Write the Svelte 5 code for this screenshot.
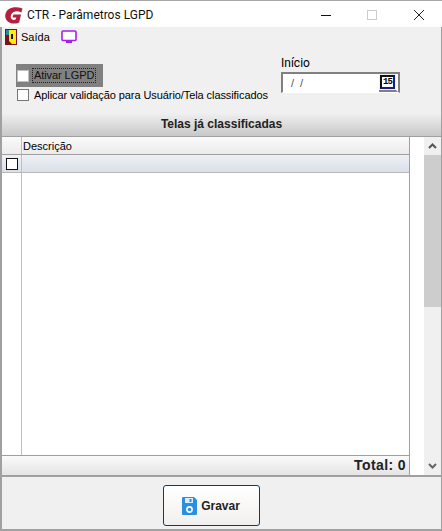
<script lang="ts">
	let ativar = $state(false);
	let aplicar = $state(false);
</script>

<div class="window">
	<header class="titlebar">
		<svg class="logo" viewBox="0 0 18 17" width="18" height="17">
			<path d="M17.5 1.6 C13 -0.2 7.5 -0.2 4 2 C0.2 4.4 -1 9.6 1.6 13.2 C4.4 17 10.2 17.4 14.2 15.4 L16 7.6 L8.4 7.6 L7.6 10.4 L11.4 10.4 L10.6 12.6 C8.4 13.4 6.2 12.6 5.8 10.2 C5.4 7.2 7.4 4.8 10.4 4.4 C12.4 4.2 14.6 4.6 16.4 5.4 Z" fill="#b3213f" />
		</svg>
		<span class="title">CTR - Parâmetros LGPD</span>
		<div class="winbtns">
			<span class="min"></span>
			<span class="max"></span>
			<svg width="12" height="12" viewBox="0 0 12 12"><path d="M1 1 L11 11 M11 1 L1 11" stroke="#222" stroke-width="1" fill="none" /></svg>
		</div>
	</header>

	<div class="body">
		<nav class="toolbar">
			<button class="tool exit">
				<svg width="12" height="16" viewBox="0 0 12 16">
					<rect width="12" height="16" fill="#7a1020" />
					<rect x="1" y="1" width="3" height="5" fill="#2a8a9a" />
					<path d="M4 1 H11 V15 H7 L4 12 Z" fill="#ffee00" />
					<rect x="6" y="5" width="2" height="5" fill="#111" />
				</svg>
				Saída
			</button>
			<button class="tool monitor" aria-label="Monitor">
				<svg width="16" height="14" viewBox="0 0 16 14">
					<rect x="1" y="1" width="14" height="9.5" rx="1" fill="#fff" stroke="#a020f0" stroke-width="1.6" />
					<rect x="5" y="11" width="6" height="2" fill="#a020f0" />
				</svg>
			</button>
		</nav>

		<section class="form">
			<div class="options">
				<label class="check focused">
					<input type="checkbox" bind:checked={ativar} />
					<span class="dotted">Ativar LGPD</span>
				</label>
				<label class="check">
					<input type="checkbox" bind:checked={aplicar} />
					<span>Aplicar validação para Usuário/Tela classificados</span>
				</label>
			</div>
			<div class="start">
				<span class="start-label">Início</span>
				<div class="datebox">
					<span class="date">/ /</span>
					<span class="calbtn"><span class="calendar">15</span></span>
				</div>
			</div>
		</section>

		<div class="panel">
			<div class="grid">
				<h2 class="grid-title">Telas já classificadas</h2>
				<div class="grid-main">
					<div class="table">
						<div class="head">
							<div class="marker"></div>
							<div class="col">Descrição</div>
						</div>
						<div class="row">
							<div class="marker"><span class="box"></span></div>
							<div class="col"></div>
						</div>
						<div class="rows">
							<div class="marker"></div>
							<div class="col"></div>
						</div>
						<div class="total">Total: 0</div>
					</div>
					<div class="gap"></div>
					<div class="scrollbar">
						<svg class="arrow" width="9" height="6" viewBox="0 0 9 6"><path d="M1 5 L4.5 1.5 L8 5" fill="none" stroke="#555" stroke-width="2" /></svg>
						<div class="track"><div class="thumb"></div></div>
						<svg class="arrow" width="9" height="6" viewBox="0 0 9 6"><path d="M1 1 L4.5 4.5 L8 1" fill="none" stroke="#666" stroke-width="2" /></svg>
					</div>
				</div>
			</div>
			<footer class="actions">
				<button class="save">
					<svg width="15" height="18" viewBox="0 0 15 18">
						<path d="M0 1 Q0 0 1 0 H12 L15 3 V17 Q15 18 14 18 H1 Q0 18 0 17 Z" fill="#2b8fe0" />
						<rect x="3" y="1" width="8" height="5" fill="#d8ecfb" />
						<rect x="7.5" y="2" width="2" height="3" fill="#2b8fe0" />
						<circle cx="7.5" cy="12.5" r="2.6" fill="none" stroke="#fff" stroke-width="1.6" />
					</svg>
					Gravar
				</button>
			</footer>
		</div>
	</div>
</div>

<style>
	:global(body) {
		margin: 0;
		background: #f0f0f0;
	}

	.window {
		width: 442px;
		height: 531px;
		display: flex;
		flex-direction: column;
		box-sizing: border-box;
		font-family: "Liberation Sans", Arial, sans-serif;
		font-size: 11px;
		color: #000;
		overflow: hidden;
	}

	.titlebar {
		height: 27px;
		flex: none;
		box-sizing: border-box;
		display: flex;
		align-items: center;
		background: #fff;
		border-top: 1px solid #a8a8a8;
		padding-left: 5px;
		padding-top: 2px;
	}

	.logo {
		margin-right: 4px;
	}

	.title {
		font-family: Roboto, "Liberation Sans", sans-serif;
		font-size: 12px;
		color: #111;
	}

	.winbtns {
		margin-left: auto;
		display: flex;
		align-items: center;
		gap: 36px;
		padding-right: 17px;
	}

	.min {
		width: 10px;
		height: 1px;
		background: #111;
	}

	.max {
		width: 10px;
		height: 10px;
		border: 1px solid #ccc;
		box-sizing: border-box;
	}

	.body {
		flex: 1;
		display: flex;
		flex-direction: column;
		min-height: 0;
		box-sizing: border-box;
		background: #f0f0f0;
		border-left: 2px solid #a0a0a0;
		border-right: 1px solid #a0a0a0;
		border-bottom: 2px solid #a0a0a0;
	}

	.toolbar {
		height: 20px;
		flex: none;
		display: flex;
		align-items: center;
		gap: 11px;
		padding-left: 3px;
	}

	.tool {
		display: flex;
		align-items: center;
		gap: 4px;
		padding: 0;
		border: 0;
		background: none;
		font: inherit;
		color: #000;
	}

	.form {
		height: 66px;
		flex: none;
		display: flex;
		box-sizing: border-box;
		padding-left: 14px;
		padding-top: 8px;
	}

	.options {
		width: 265px;
		padding-top: 9px;
		display: flex;
		flex-direction: column;
		align-items: flex-start;
		letter-spacing: -0.08px;
	}

	.check {
		display: flex;
		align-items: center;
		gap: 5px;
		height: 16px;
		white-space: nowrap;
	}

	.check input {
		appearance: none;
		width: 12px;
		height: 12px;
		margin: 0 0 0 1px;
		background: #fff;
		border: 1px solid #777;
		box-sizing: border-box;
	}

	.focused {
		background: #808080;
		height: 23px;
		width: 87px;
		color: #111;
	}

	.focused input {
		border-color: #c0c0c0;
	}

	.dotted {
		outline: 1px dotted #222;
		line-height: 13px;
		padding: 0 1px;
		margin-left: -1px;
	}

	.start {
		display: flex;
		flex-direction: column;
		gap: 2px;
	}

	.start-label {
		font-family: Roboto, "Liberation Sans", sans-serif;
		line-height: 17px;
		font-size: 12px;
		margin-bottom: -2px;
	}

	.datebox {
		width: 119px;
		height: 21px;
		box-sizing: border-box;
		background: #fff;
		border: 2px solid #808080;
		border-bottom: 1px solid #fff;
		display: flex;
		align-items: stretch;
		justify-content: space-between;
		color: #555;
	}

	.date {
		margin-left: 8px;
		word-spacing: 3px;
		line-height: 18px;
	}

	.calbtn {
		width: 19px;
		box-sizing: border-box;
		background: #f0f0f0;
		border-right: 2px solid #fff;
		border-bottom: 2px solid #808080;
		display: flex;
		align-items: center;
		justify-content: center;
	}

	.calendar {
		width: 15px;
		height: 14px;
		box-sizing: border-box;
		background: #fff;
		border: 2px solid #111;
		border-right-color: #1a1a8a;
		border-bottom-color: #1a1a8a;
		font-family: "Liberation Mono", monospace;
		font-size: 9px;
		font-weight: bold;
		line-height: 10px;
		letter-spacing: -1px;
		text-align: center;
		color: #000;
	}

	.panel {
		flex: 1;
		min-height: 0;
		display: flex;
		flex-direction: column;
	}

	.grid {
		height: 364px;
		flex: none;
		display: flex;
		flex-direction: column;
		border-bottom: 2px solid #a0a0a0;
		box-sizing: border-box;
	}

	.grid-title {
		height: 24px;
		flex: none;
		margin: 0;
		box-sizing: border-box;
		border-bottom: 1px solid #a0a0a0;
		background: linear-gradient(#f0f0f0, #c8c8c8);
		font-size: 12px;
		font-weight: bold;
		line-height: 22px;
		text-align: center;
		color: #222;
	}

	.grid-main {
		flex: 1;
		min-height: 0;
		display: flex;
	}

	.table {
		width: 408px;
		display: flex;
		flex-direction: column;
		box-sizing: border-box;
		border-right: 1px solid #a0a0a0;
		background: #fff;
	}

	.head,
	.row,
	.rows {
		display: flex;
	}

	.head {
		height: 18px;
		flex: none;
		box-sizing: border-box;
		background: linear-gradient(#fafafa, #ebebeb);
		border-bottom: 1px solid #a0a0a0;
		line-height: 18px;
		font-size: 11px;
	}

	.row {
		height: 18px;
		flex: none;
		box-sizing: border-box;
		background: linear-gradient(#eef1f5, #d8e0e8);
		border-bottom: 1px solid #b8b8b8;
	}

	.rows {
		flex: 1;
		min-height: 0;
	}

	.marker {
		width: 19px;
		flex: none;
		border-right: 1px solid #c0c0c0;
		display: flex;
		align-items: center;
		justify-content: center;
	}

	.box {
		width: 12px;
		height: 12px;
		background: #fff;
		border: 1px solid #111;
		box-sizing: border-box;
	}

	.col {
		flex: 1;
		padding-left: 1px;
	}

	.total {
		height: 20px;
		flex: none;
		box-sizing: border-box;
		background: linear-gradient(#fafafa, #e4e4e4);
		border-top: 1px solid #a0a0a0;
		text-align: right;
		padding-right: 3px;
		font-size: 14px;
		font-weight: bold;
		letter-spacing: 0.4px;
		line-height: 19px;
		color: #222;
	}

	.gap {
		width: 14px;
		flex: none;
		background: #fff;
	}

	.scrollbar {
		width: 17px;
		flex: none;
		display: flex;
		flex-direction: column;
		align-items: center;
		background: #f0f0f0;
	}

	.arrow {
		flex: none;
		margin: 6px 0;
	}

	.track {
		flex: 1;
		align-self: stretch;
		background: #f0f0f0;
	}

	.thumb {
		height: 152px;
		background: #cdcdcd;
	}

	.actions {
		flex: 1;
		display: flex;
		justify-content: center;
		align-items: center;
		padding-top: 5px;
		padding-right: 20px;
	}

	.save {
		width: 97px;
		height: 41px;
		display: flex;
		align-items: center;
		justify-content: center;
		gap: 4px;
		padding: 0 1px 0 0;
		box-sizing: border-box;
		border: 1px solid #00407a;
		border-radius: 3px;
		background: linear-gradient(#fff, #f2f0ee);
		font-family: inherit;
		font-size: 12px;
		font-weight: bold;
		color: #222;
	}
</style>
